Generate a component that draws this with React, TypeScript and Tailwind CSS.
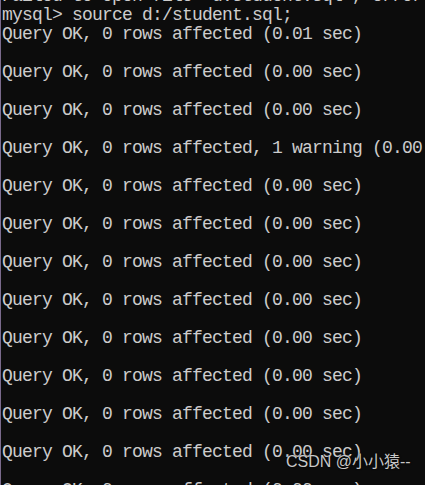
import React from "react";

const ok = "Query OK, 0 rows affected (0.00 sec)";
const lines: string[] = [
  "Failed to open file 'd:student.sql', error: 2",
  "mysql> source d:/student.sql;",
  "Query OK, 0 rows affected (0.01 sec)",
  "",
  ok,
  "",
  ok,
  "",
  "Query OK, 0 rows affected, 1 warning (0.00 sec)",
  "",
  ok,
  "",
  ok,
  "",
  ok,
  "",
  ok,
  "",
  ok,
  "",
  ok,
  "",
  ok,
  "",
  ok,
  "",
  ok,
];

export default function App() {
  return (
    <div className="relative w-[425px] h-[485px] overflow-hidden bg-[#0c0c0c] border-l border-[#7a6a8c]">
      <div
        className="mt-[-13px] pl-[1px] text-[18px] leading-[19px] tracking-[-0.8px] text-[#cccccc] whitespace-pre"
        style={{ fontFamily: '"Liberation Mono", monospace' }}
      >
        {lines.map((l, i) => (
          <div key={i} className="h-[19px]">
            {l}
          </div>
        ))}
      </div>
      <div
        className="absolute left-[285px] top-[452px] text-[16px] leading-[20px] text-[#c8c8c8]"
        style={{ fontFamily: '"Liberation Sans", "Noto Sans CJK SC", sans-serif', textShadow: "0 0 2px #000" }}
      >
        CSDN @小小猿--
      </div>
    </div>
  );
}
